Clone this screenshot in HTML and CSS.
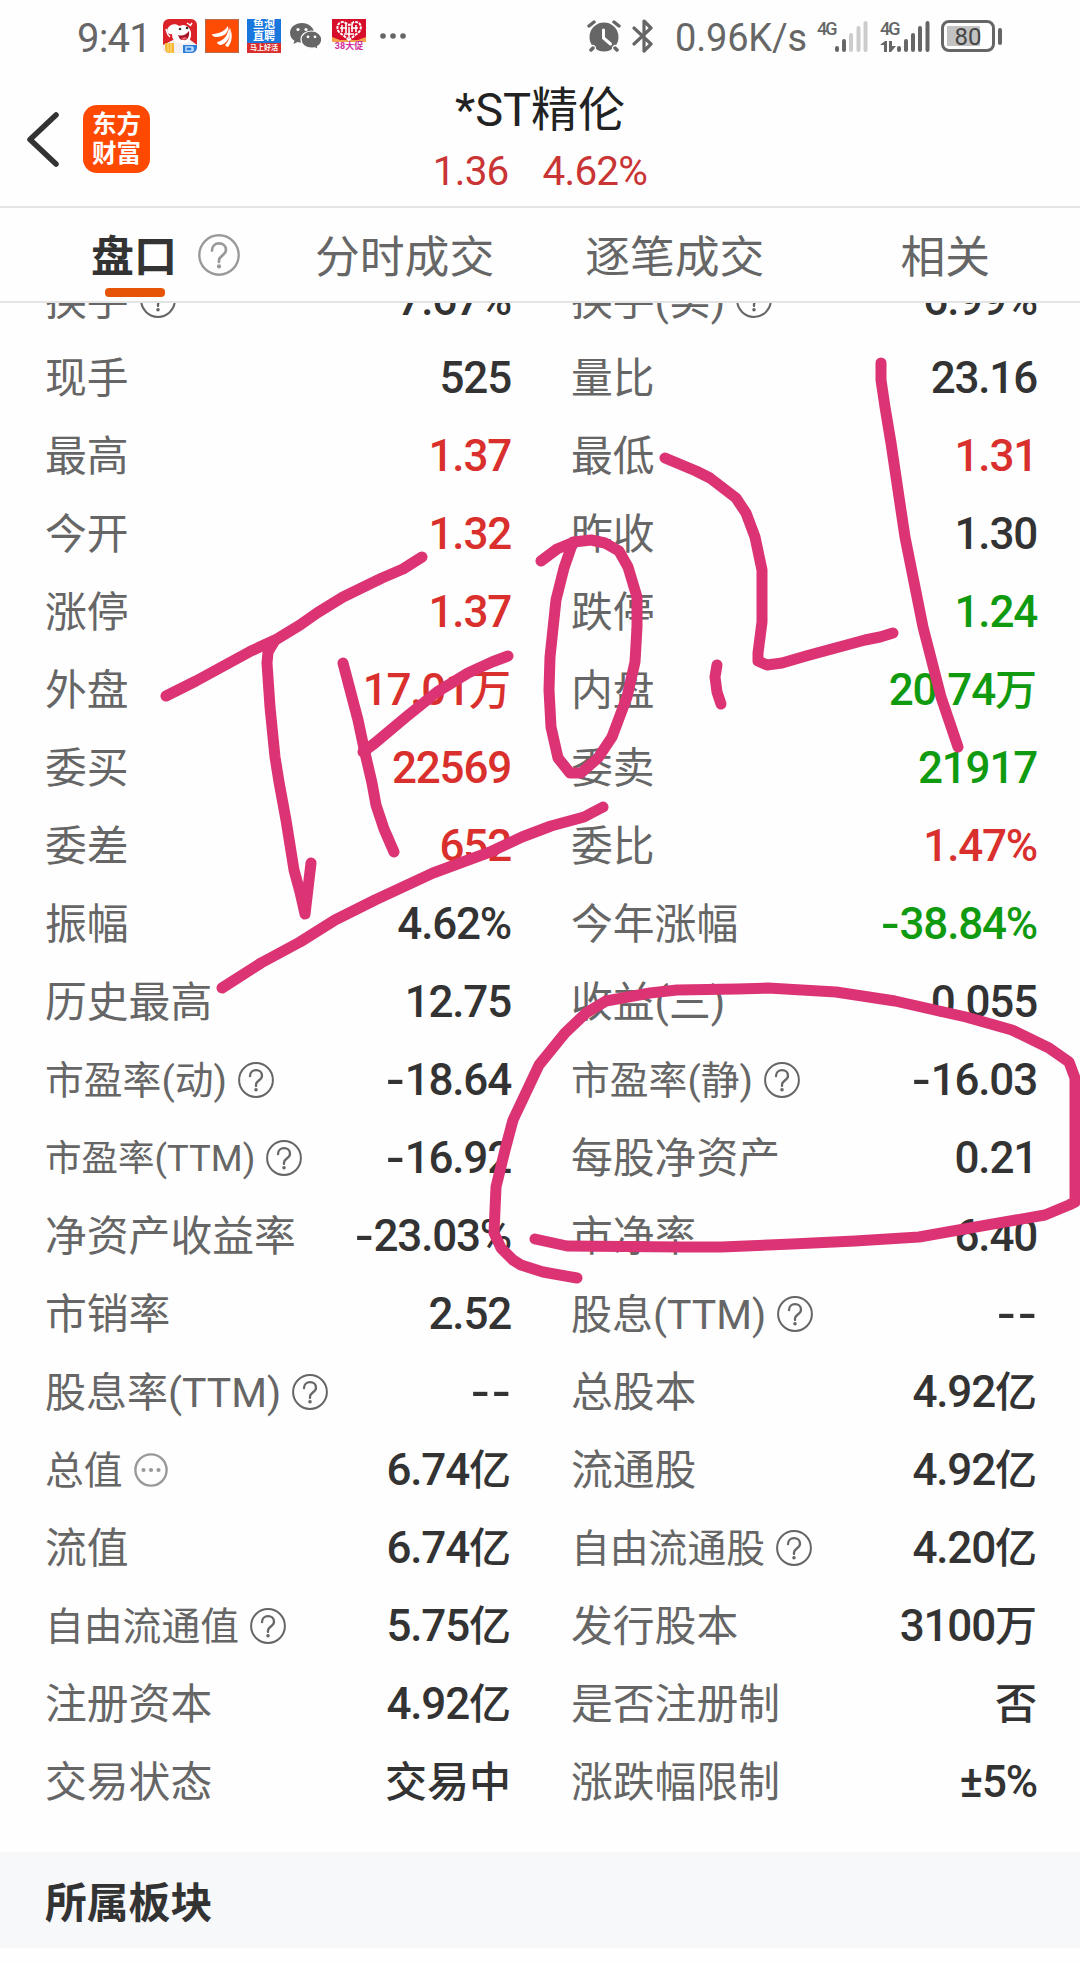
FILE: index.html
```html
<!DOCTYPE html>
<html lang="zh-CN">
  <head>
    <meta charset="UTF-8" />
    <meta name="viewport" content="width=device-width, initial-scale=1.0" />
    <title>*ST精伦 - 盘口</title>
    <link rel="stylesheet" href="styles.css">
  </head>
  <body>
    <!-- Shared icons -->
    <svg class="sprite" aria-hidden="true">
      <symbol id="icon-help" viewBox="0 0 36 36">
        <circle cx="18" cy="18" r="16.9" fill="none" stroke="currentColor" stroke-width="2" />
        <path d="M12 14.2c0-3.7 2.6-6.1 6-6.1s6 2.3 6 5.6c0 4.700-6 4.800-6 8.800v1.500" fill="none" stroke="currentColor" stroke-width="2.300" stroke-linecap="round" />
        <circle cx="18" cy="27.800" r="1.800" fill="currentColor" />
      </symbol>
      <symbol id="icon-more" viewBox="0 0 34 34">
        <circle cx="17" cy="17" r="15.600" fill="none" stroke="currentColor" stroke-width="2.400" />
        <circle cx="9.500" cy="17" r="2.100" fill="currentColor" />
        <circle cx="17" cy="17" r="2.100" fill="currentColor" />
        <circle cx="24.500" cy="17" r="2.100" fill="currentColor" />
      </symbol>
    </svg>

    <div class="status-bar">
      <span class="time">9:41</span>
      <div class="app-icons">
        <svg width="34" height="34" viewBox="0 0 34 34">
          <rect width="34" height="34" rx="6" fill="#dc2229" />
          <path d="M0 26L12 20h14l8 6v3a5 5 0 0 1-5 5H5a5 5 0 0 1-5-5z" fill="#f3f0f3" />
          <path d="M5 9c2-4 8-5 11-2l4-1c5 0 9 5 8 11s-5 8-11 7S9 20 9 15c-4 1-6-3-4-6z" fill="#fff" />
          <path d="M3 10c1 3 1 6 4 8M29 4l-2 3M24 4l3 2" stroke="#fff" stroke-width="1.500" fill="none" />
          <path d="M15 16q6 2 11-4c1 6-2 10-6 9-3 0-4-2-5-5z" fill="#a51828" />
          <path d="M18 20q3-3 6-1-2 3-6 1z" fill="#ff6b75" />
          <circle cx="17" cy="10" r="1.300" fill="#333" />
          <circle cx="24" cy="9" r="1.300" fill="#333" />
          <path d="M2 24h9v10H5q-3-1-3-5z" fill="#f7b636" />
          <path d="M5 24v9M8 24v10" stroke="#ffe183" />
          <path d="M20 26h14v3q-1 5-6 5h-8z" fill="#2d7dd8" />
          <path d="M23 28h6v4h-6zM30 28v4" stroke="#b9dcff" stroke-width="1.500" fill="none" />
        </svg>
        <svg width="34" height="34" viewBox="0 0 34 34">
          <rect x=".5" y=".5" width="33" height="33" fill="#ff4c05" stroke="#b66b4c" />
          <path d="M7 15c6 0 12-2 16-8 1 7-4 11-12 11-2 0-4-1-4-3zM12 23c6-1 11-6 12-15 3 8-1 16-8 18-2 0-4-1-4-3zM20 26c4-4 6-10 5-17 3 7 2 14-2 19-1 0-2-1-3-2z" fill="#fff" />
        </svg>
        <div class="app-yupao">
          <span>鱼泡</span>
          <span>直聘</span>
          <em>马上好活</em>
        </div>
        <svg class="wechat" width="32" height="27" viewBox="0 0 32 27">
          <path d="M12 0C5.300 0 0 4.300 0 10c0 3.200 1.700 6 4.500 7.800L3.400 21l4.200-2.100c1.400.4 2.800.6 4.400.6C18.600 19.500 24 15.500 24 10S18.600 0 12 0z" fill="#666" />
          <circle cx="8" cy="6.500" r="1.600" fill="#fff" />
          <circle cx="16" cy="6.500" r="1.600" fill="#fff" />
          <path d="M21.500 8C15.500 8 11 12 11 16.600s4.500 8.600 10.500 8.600c1.200 0 2.300-.2 3.300-.4l3.500 1.800-.8-3c2.600-1.600 4.200-4.100 4.200-7C31.700 12 27.500 8 21.500 8z" fill="#666" stroke="#fff" stroke-width="1.200" />
          <circle cx="18" cy="13.800" r="1.400" fill="#fff" />
          <circle cx="25" cy="13.800" r="1.400" fill="#fff" />
        </svg>
        <div class="app-sale">
          <svg width="34" height="23" viewBox="0 0 34 23">
            <path d="M0 0h34v23H0z" fill="#d70d2c" />
            <path d="M0 18l8 3h18l8-3v5H0z" fill="#f6a04c" />
            <path d="M17 21L7 13C3 8 7 2 12 3l5 3 5-3c6-1 9 5 5 10z" fill="none" stroke="#fff" stroke-width="2" stroke-dasharray="3 1" />
            <path d="M10 6v7M8 9h7M14 5v9M17 8v11M20 5v8M19 9h7M24 6v7M12 15h10" stroke="#fff" stroke-width="1.600" />
          </svg>
          <span>38大促</span>
        </div>
        <svg class="dots" width="26" height="6" viewBox="0 0 26 6" fill="#666">
          <circle cx="3" cy="3" r="2.800" />
          <circle cx="13" cy="3" r="2.800" />
          <circle cx="23" cy="3" r="2.800" />
        </svg>
      </div>
      <div class="system-icons">
        <svg width="34" height="32" viewBox="0 0 34 32">
          <circle cx="17" cy="17" r="14.500" fill="#666" />
          <path d="M2 6l5-4M32 6l-5-4M6 28l-2 2M28 28l2 2" stroke="#fefefe" stroke-width="6" stroke-linecap="round" />
          <path d="M2 6l5-4M32 6l-5-4M6 28l-2 2M28 28l2 2" stroke="#666" stroke-width="3.500" stroke-linecap="round" />
          <path d="M16.500 10v8l7 6" stroke="#fff" stroke-width="3" fill="none" stroke-linecap="round" />
        </svg>
        <svg class="bluetooth" width="22" height="34" viewBox="0 0 22 34">
          <path d="M2 9l17 16-7 7V2l7 7L2 25" fill="none" stroke="#666" stroke-width="3.200" stroke-linejoin="round" stroke-linecap="round" />
        </svg>
        <span class="speed">0.96K/s</span>
        <div class="signal signal-1">
          <span>4G</span>
          <svg width="33" height="31" viewBox="0 0 33 31">
            <path d="M2 27v2M9 20v9" stroke="#666" stroke-width="4" stroke-linecap="round" />
            <path d="M16 14v15M23.500 7v22M30.500 2v27" stroke="#ccc" stroke-width="4" stroke-linecap="round" />
          </svg>
        </div>
        <div class="signal signal-2">
          <span>4G</span>
          <svg width="50" height="31" viewBox="0 0 50 31">
            <path d="M19 27v2M26 20v9M33 14v15M40 7v22M47.500 2v27" stroke="#666" stroke-width="4" stroke-linecap="round" />
            <path d="M0 24l5-4h2v11H4v-7zM9 20h3v5h4l-5 6H9z" fill="#666" />
          </svg>
        </div>
        <div class="battery"><span>80</span></div>
      </div>
    </div>

    <header class="stock-header">
      <svg class="back" width="34" height="56" viewBox="0 0 34 56">
        <path d="M31 4L5 28.500l26 24.500" fill="none" stroke="#333" stroke-width="5.500" stroke-linecap="round" stroke-linejoin="round" />
      </svg>
      <div class="brand"><span>东方</span><span>财富</span></div>
      <div class="stock-title">
        <h1>*ST精伦</h1>
        <p><span>1.36</span><span>4.62%</span></p>
      </div>
    </header>

    <nav class="tabs">
      <a class="tab active">盘口</a>
      <svg class="tab-help"><use href="#icon-help" /></svg>
      <a class="tab tab-time">分时成交</a>
      <a class="tab tab-tick">逐笔成交</a>
      <a class="tab tab-related">相关</a>
    </nav>

    <main class="quote">
      <div class="quote-list">
        <div class="cell"><span class="label">换手</span><svg class="icon"><use href="#icon-help" /></svg><b>7.67%</b></div>
        <div class="cell"><span class="label">换手(实)</span><svg class="icon"><use href="#icon-help" /></svg><b>6.99%</b></div>

        <div class="cell"><span class="label">现手</span><b>525</b></div>
        <div class="cell"><span class="label">量比</span><b>23.16</b></div>

        <div class="cell"><span class="label">最高</span><b class="up">1.37</b></div>
        <div class="cell"><span class="label">最低</span><b class="up">1.31</b></div>

        <div class="cell"><span class="label">今开</span><b class="up">1.32</b></div>
        <div class="cell"><span class="label">昨收</span><b>1.30</b></div>

        <div class="cell"><span class="label">涨停</span><b class="up">1.37</b></div>
        <div class="cell"><span class="label">跌停</span><b class="down">1.24</b></div>

        <div class="cell"><span class="label">外盘</span><b class="up">17.01<i class="unit">万</i></b></div>
        <div class="cell"><span class="label">内盘</span><b class="down">20.74<i class="unit">万</i></b></div>

        <div class="cell"><span class="label">委买</span><b class="up">22569</b></div>
        <div class="cell"><span class="label">委卖</span><b class="down">21917</b></div>

        <div class="cell"><span class="label">委差</span><b class="up">652</b></div>
        <div class="cell"><span class="label">委比</span><b class="up">1.47%</b></div>

        <div class="cell"><span class="label">振幅</span><b>4.62%</b></div>
        <div class="cell"><span class="label">今年涨幅</span><b class="down"><i class="minus">-</i>38.84%</b></div>

        <div class="cell"><span class="label">历史最高</span><b>12.75</b></div>
        <div class="cell"><span class="label">收益(三)</span><b>0.055</b></div>

        <div class="cell"><span class="label label-sm">市盈率(动)</span><svg class="icon"><use href="#icon-help" /></svg><b><i class="minus">-</i>18.64</b></div>
        <div class="cell"><span class="label label-sm">市盈率(静)</span><svg class="icon"><use href="#icon-help" /></svg><b><i class="minus">-</i>16.03</b></div>

        <div class="cell"><span class="label label-xs">市盈率(TTM)</span><svg class="icon"><use href="#icon-help" /></svg><b><i class="minus">-</i>16.92</b></div>
        <div class="cell"><span class="label">每股净资产</span><b>0.21</b></div>

        <div class="cell"><span class="label">净资产收益率</span><b><i class="minus">-</i>23.03%</b></div>
        <div class="cell"><span class="label">市净率</span><b>6.40</b></div>

        <div class="cell"><span class="label">市销率</span><b>2.52</b></div>
        <div class="cell"><span class="label label-ttm">股息(TTM)</span><svg class="icon"><use href="#icon-help" /></svg><b><i class="minus">-</i><i class="minus">-</i></b></div>

        <div class="cell"><span class="label label-ttm">股息率(TTM)</span><svg class="icon"><use href="#icon-help" /></svg><b><i class="minus">-</i><i class="minus">-</i></b></div>
        <div class="cell"><span class="label">总股本</span><b>4.92<i class="unit">亿</i></b></div>

        <div class="cell"><span class="label label-sm">总值</span><svg class="icon icon-more"><use href="#icon-more" /></svg><b>6.74<i class="unit">亿</i></b></div>
        <div class="cell"><span class="label">流通股</span><b>4.92<i class="unit">亿</i></b></div>

        <div class="cell"><span class="label">流值</span><b>6.74<i class="unit">亿</i></b></div>
        <div class="cell"><span class="label label-sm">自由流通股</span><svg class="icon"><use href="#icon-help" /></svg><b>4.20<i class="unit">亿</i></b></div>

        <div class="cell"><span class="label label-sm">自由流通值</span><svg class="icon"><use href="#icon-help" /></svg><b>5.75<i class="unit">亿</i></b></div>
        <div class="cell"><span class="label">发行股本</span><b>3100<i class="unit">万</i></b></div>

        <div class="cell"><span class="label">注册资本</span><b>4.92<i class="unit">亿</i></b></div>
        <div class="cell"><span class="label">是否注册制</span><b><i class="unit">否</i></b></div>

        <div class="cell"><span class="label">交易状态</span><b><i class="unit">交易中</i></b></div>
        <div class="cell"><span class="label">涨跌幅限制</span><b>±5%</b></div>
      </div>
    </main>

    <section class="sector">
      <h2>所属板块</h2>
    </section>

    <!-- Handwritten marks over the page -->
    <svg class="doodle" width="1080" height="1963" viewBox="0 0 1080 1963">
      <polyline points="166,696 196,681 251,651 277,639 300,625 317,613 343,597 382,578 403,569 422,557" />
      <polyline points="274,642 268,652 267,663 270,707 275,757 279,782 286,820 294,870 300,892 305,914 311,863" />
      <polyline points="343,663 358,720 365,753 372,783 376,805 384,829 394,852" />
      <polyline points="508,656 492,662 468,673 437,692 406,717 375,743 363,752" />
      <polyline points="222,988 261,963 300,942 335,920 375,900 433,873 490,852 522,837 551,826 584,817 603,807" />
      <polyline points="665,458 696,471 710,478 736,498 746,513 755,537 762,570 762,622 758,653 758,661 767,665 782,663 806,656 865,640 880,637 893,633" />
      <polyline points="717,665 715,677 717,692 721,704" />
      <polyline points="881,363 881,380 885,407 891,443 899,497 905,537 923,627 941,697 958,747" />
      <polyline points="541,561 557,549 574,542 591,540 605,543 619,551 628,567 637,597 637,627 635,662 627,697 612,737 598,758 581,773 570,773 558,758 551,727 549,690 550,657 556,600 564,568 573,542" />
      <polyline points="535,1239 567,1246 681,1247 721,1247 792,1244 855,1241 919,1237 970,1228 1045,1215 1069,1205 1075,1202 1075,1078 1069,1062 1049,1048 1012,1030 966,1017 895,1001 836,992 768,988 737,989 677,990 650,993 606,1001 586,1013 565,1033 539,1065 513,1120 505,1150 496,1187 494,1233 501,1248 513,1260 521,1265 543,1272 577,1278" />
    </svg>
  </body>
</html>
```
FILE: styles.css
```css
* {
  box-sizing: border-box;
}

body {
  position: relative;
  width: 1080px;
  height: 1963px;
  margin: 0;
  overflow: hidden;
  background: #fefefe;
  color: #333;
  font-family: Roboto, "Noto Sans CJK SC", sans-serif;
}

svg {
  display: block;
  flex: none;
}

.sprite {
  display: none;
}

/* Status bar */
.status-bar {
  display: flex;
  align-items: center;
  height: 72px;
  padding: 0 77px 0 77px;
  color: #666;
}

.time {
  width: 86px;
  font-size: 40px;
  letter-spacing: -0.8px;
  line-height: 76px;
  padding-top: 5px;
}

.app-icons {
  display: flex;
  align-items: center;
  gap: 8px;
}

.app-yupao {
  display: flex;
  flex-direction: column;
  align-items: center;
  width: 34px;
  height: 34px;
  overflow: hidden;
  background: #1977dd;
  color: #fff;
  font-size: 11px;
  font-weight: 700;
  line-height: 12px;
}

.app-yupao span {
  height: 12px;
}

.app-yupao em {
  width: 34px;
  height: 10px;
  background: #d82e2c;
  font-size: 7px;
  line-height: 10px;
  text-align: center;
  font-style: normal;
}

.wechat {
  margin: 0 2px 0 1px;
}

.app-sale {
  width: 34px;
  height: 34px;
  color: #d12d9b;
  font-size: 9px;
  font-weight: 700;
  line-height: 9px;
  text-align: center;
  white-space: nowrap;
}

.app-sale span {
  display: block;
}

.dots {
  margin-left: 6px;
}

.system-icons {
  display: flex;
  align-items: center;
  margin-left: auto;
}

.bluetooth {
  margin-left: 11px;
}

.speed {
  flex: none;
  width: 163px;
  padding: 4px 0 0 21px;
  font-size: 38px;
  letter-spacing: -0.2px;
  white-space: nowrap;
}

.signal {
  position: relative;
  height: 31px;
  font-size: 18px;
  font-weight: 500;
  line-height: 15px;
}

.signal span {
  position: absolute;
  top: 0;
  left: 0;
  letter-spacing: -2px;
}

.signal-1 {
  width: 51px;
  padding-left: 18px;
}

.signal-2 {
  width: 50px;
  margin-left: 12px;
}

.battery {
  position: relative;
  width: 54px;
  height: 32px;
  margin: 0 8px 0 11px;
  border: 3px solid #666;
  border-radius: 8px;
  background: linear-gradient(#c2c2c2, #c2c2c2) 3px 3px / 33px 20px no-repeat;
  color: #444;
  font-size: 24px;
  line-height: 28px;
  text-align: center;
}

.battery::after {
  content: "";
  position: absolute;
  top: 5px;
  right: -10px;
  width: 4px;
  height: 17px;
  border-radius: 2px;
  background: #666;
}

/* Header */
.stock-header {
  display: grid;
  grid-template-columns: 34px 67px 1fr;
  align-items: center;
  height: 136px;
  padding: 0 25px;
  border-bottom: 2px solid #e4e4e4;
}

.brand {
  display: flex;
  flex-direction: column;
  align-items: center;
  justify-content: center;
  width: 67px;
  height: 68px;
  margin-left: 24px;
  border-radius: 14px;
  background: #ff4800;
  color: #fff;
  font-size: 24.5px;
  font-weight: 700;
  line-height: 29px;
}

.stock-title {
  margin-right: 101px;
  padding-top: 2px;
  text-align: center;
}

.stock-title h1 {
  margin: 0;
  font-size: 47px;
  font-weight: 400;
  line-height: 62px;
  color: #222;
}

.stock-title p {
  display: flex;
  justify-content: center;
  gap: 34px;
  margin: 0;
  font-size: 40.5px;
  line-height: 60px;
  letter-spacing: -0.8px;
  color: #c93434;
}

/* Tabs */
.tabs {
  display: flex;
  align-items: center;
  height: 95px;
  padding-left: 91px;
  border-bottom: 2px solid #e4e4e4;
}

.tab {
  position: relative;
  padding-top: 6px;
  color: #666;
  font-size: 44.8px;
  line-height: 87px;
  white-space: nowrap;
}

.tab.active {
  width: 86px;
  font-size: 43px;
  font-weight: 700;
  color: #333;
}

.tab.active::after {
  content: "";
  position: absolute;
  bottom: 4px;
  left: 14px;
  width: 60px;
  height: 9px;
  border-radius: 4px;
  background: #e65507;
}

.tab-help {
  width: 42px;
  height: 42px;
  margin-left: 21px;
  color: #999;
}

.tab-time {
  margin-left: 75px;
}

.tab-tick {
  margin-left: 91px;
}

.tab-related {
  margin-left: 136px;
}

/* Quote list, scrolled part of a row under the tabs */
.quote {
  height: 1549px;
  overflow: hidden;
}

.quote-list {
  display: grid;
  grid-template-columns: 466px 466px;
  grid-auto-rows: 78px;
  column-gap: 60px;
  margin-top: -42px;
  padding-left: 45px;
}

.cell {
  display: flex;
  align-items: center;
  line-height: 78px;
  white-space: nowrap;
}

.label {
  padding-top: 2px;
  color: #666;
  font-size: 41.8px;
}

.label-ttm {
  font-size: 41px;
}

.label-sm {
  font-size: 38.8px;
}

.label-xs {
  font-size: 36.5px;
}

.icon {
  width: 36px;
  height: 36px;
  margin-left: 11px;
  color: #666;
}

.icon-more {
  width: 34px;
  height: 34px;
  color: #999;
}

.cell b {
  margin-left: auto;
  font-size: 44px;
  font-weight: 500;
  letter-spacing: -1.2px;
}

.cell .up {
  color: #d92f2d;
}

.cell .down {
  color: #109a10;
}

.unit {
  font-size: 42px;
  font-style: normal;
  letter-spacing: 0;
}

.minus {
  display: inline-block;
  width: 21px;
  text-align: center;
  font-style: normal;
  transform: scaleX(1.25);
}

/* Sector */
.sector {
  height: 96px;
  padding-left: 45px;
  background: #f7f8fa;
}

.sector h2 {
  margin: 0;
  padding-top: 4px;
  font-size: 41.8px;
  font-weight: 700;
  line-height: 96px;
}

.doodle {
  position: absolute;
  top: 0;
  left: 0;
  pointer-events: none;
}

.doodle polyline {
  fill: none;
  stroke: #db3374;
  stroke-width: 11;
  stroke-linecap: round;
  stroke-linejoin: round;
}
```
